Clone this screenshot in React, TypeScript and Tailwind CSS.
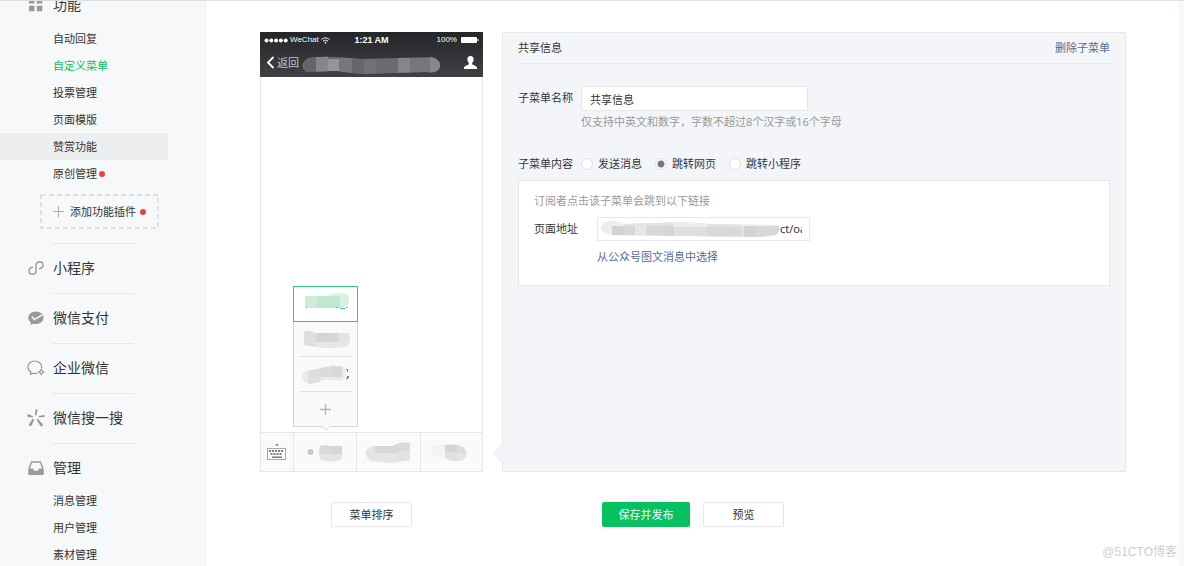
import React from "react";

type Cell = [x: number, y: number, w: number, h: number, fill: string];

function Mosaic({ id, w, h, shape, cells, base, className = "" }: {
  id: string; w: number; h: number; shape: string; cells: Cell[]; base: string; className?: string;
}) {
  return (
    <svg width={w} height={h} viewBox={`0 0 ${w} ${h}`} className={`shrink-0 ${className}`} aria-hidden="true">
      <clipPath id={id}><path d={shape} /></clipPath>
      <g clipPath={`url(#${id})`}>
        <rect width={w} height={h} fill={base} />
        {cells.map(([x, y, cw, ch, fill], i) => <rect key={i} x={x} y={y} width={cw} height={ch} fill={fill} />)}
      </g>
    </svg>
  );
}

const GridIcon = () => (
  <svg width="18" height="18" viewBox="0 0 18 18" fill="#999">
    <rect x="2" y="2" width="5.500" height="5.500" rx=".5" /><rect x="9.800" y="2" width="5.500" height="5.500" rx=".5" />
    <rect x="2" y="9.800" width="5.500" height="5.500" rx=".5" /><rect x="9.800" y="9.800" width="5.500" height="5.500" rx=".5" />
  </svg>
);

const MiniProgramIcon = () => (
  <svg width="18" height="18" viewBox="0 0 18 18" fill="none" stroke="#999" strokeWidth="1.400" strokeLinecap="round">
    <path d="M5.600 8.300C3.400 8.600 2 10 2 11.900c0 2 1.500 3.400 3.500 3.400S9 13.900 9 12V6.200C9 4.200 10.600 2.800 12.500 2.800S16 4.200 16 6c0 1.900-1.400 3.300-3.500 3.600" />
  </svg>
);

const PayIcon = () => (
  <svg width="18" height="18" viewBox="0 0 18 18">
    <path d="M9 2.400c4.200 0 7.500 2.800 7.500 6.300S13.200 15 9 15c-.9 0-1.700-.1-2.500-.3L3.300 16l.5-2.500C2.300 12.400 1.300 10.700 1.300 8.700 1.300 5.200 4.800 2.400 9 2.400Z" fill="#999" />
    <path d="M4.800 7.600 7.300 10.600 15.200 6" fill="none" stroke="#f6f8f9" strokeWidth="1.500" />
  </svg>
);

const WorkIcon = () => (
  <svg width="18" height="18" viewBox="0 0 18 18" fill="none" stroke="#999" strokeWidth="1.200" strokeLinejoin="round">
    <path d="M10.600 14.200c-1.400.4-3 .4-4.400 0L3.500 15.400l.3-2.600C1.900 11.600.8 10 .8 8 .8 4.600 3.900 2 7.700 2s6.900 2.600 6.900 6c0 .5-.1 1-.2 1.400" />
    <path d="m14.200 10.300 1 1.600 1.600 1-1.600 1-1 1.600-1-1.600-1.600-1 1.600-1Z" />
  </svg>
);

const SearchSparkIcon = () => (
  <svg width="18" height="18" viewBox="0 0 18 18" fill="#999">
    <path d="M8.400.8Q9.700-.3 10.600 1L9.200 6.200H7.900ZM.3 6.600Q.2 5.100 1.800 5.200L6 7.300 5.700 8.600.9 7.900ZM17.600 5.900Q18.100 7.400 17 7.900L11.900 8.300 11.700 7ZM2.800 16.900Q1.400 16.200 2.200 14.800L5.700 9.700 7.300 10.200 4.700 16.600Q3.900 17.400 2.800 16.900ZM9.500 10.500 11 9.900 15.600 14.900Q16.300 16.300 15.300 17 14.100 17.600 13.300 16.700Z" />
  </svg>
);

const TrayIcon = () => (
  <svg width="18" height="18" viewBox="0 0 18 18">
    <path d="M4.500 3h9L16 10v5.300H2V10Z" fill="none" stroke="#999" strokeWidth="1.400" strokeLinejoin="round" />
    <path d="M2 9.500h4c.2 1.700 1.300 2.500 3 2.500s2.800-.8 3-2.500h4v6H2Z" fill="#999" />
  </svg>
);

const featureItems = [
  { label: "自动回复" },
  { label: "自定义菜单", active: true },
  { label: "投票管理" },
  { label: "页面模版" },
  { label: "赞赏功能", hover: true },
  { label: "原创管理", dot: true },
];

const sections = [
  { label: "小程序", icon: <MiniProgramIcon /> },
  { label: "微信支付", icon: <PayIcon /> },
  { label: "企业微信", icon: <WorkIcon /> },
  { label: "微信搜一搜", icon: <SearchSparkIcon /> },
  { label: "管理", icon: <TrayIcon /> },
];

const Dot = () => <span className="size-1.5 rounded-full bg-[#e64340]" />;

function SubItem({ label, active, hover, dot }: { label: string; active?: boolean; hover?: boolean; dot?: boolean }) {
  return (
    <li>
      <a
        href="#"
        className={`flex h-[27px] items-center gap-0.5 pl-[53px] ${active ? "text-[#07c160]" : ""} ${hover ? "mr-[37px] bg-[#edeeef]" : ""}`}
      >
        {label}
        {dot && <Dot />}
      </a>
    </li>
  );
}

function Sidebar() {
  return (
    <nav className="w-[206px] shrink-0 border-r border-[#eef0f2] bg-[#f6f8f9]">
      <a href="#" className="-mt-2 flex h-6 items-center gap-2 pl-[27px] text-sm"><GridIcon />功能</a>
      <ul className="mt-2">{featureItems.map((i) => <SubItem key={i.label} {...i} />)}</ul>
      <button className="mt-[7px] ml-10 flex h-[35px] w-[119px] items-center justify-center gap-1.5">
        <svg className="absolute" width="119" height="35" fill="none" aria-hidden="true">
          <rect x="1" y="1" width="117" height="33" stroke="#d5d7d9" strokeWidth="1.500" strokeDasharray="5 3" />
        </svg>
        <svg width="11" height="11" viewBox="0 0 11 11" stroke="#aaa"><path d="M0 5.500h11M5.500 0v11" /></svg>
        <span className="flex items-center gap-1">添加功能插件<Dot /></span>
      </button>
      <div className="mt-3.5">
        {sections.map((s) => (
          <div key={s.label}>
            <div className="mr-[71px] ml-[53px] border-t border-[#e7e8eb]" />
            <a href="#" className="flex h-[49px] items-center gap-2 pb-0.5 pl-[27px] text-sm">{s.icon}{s.label}</a>
          </div>
        ))}
      </div>
      <ul className="-mt-1.5">
        <SubItem label="消息管理" /><SubItem label="用户管理" /><SubItem label="素材管理" />
      </ul>
    </nav>
  );
}

function PhoneHeader() {
  return (
    <header className="flex h-[45px] flex-col bg-gradient-to-b from-[#252628] to-[#404145] text-white">
      <div className="grid h-4 grid-cols-3 items-center px-1 font-['Liberation_Sans',sans-serif] text-[8px] leading-4">
        <div className="flex items-center gap-0.5">
          <svg width="24" height="5" fill="#fff"><circle cx="2.500" cy="2.500" r="2" /><circle cx="7.300" cy="2.500" r="2" /><circle cx="12.100" cy="2.500" r="2" /><circle cx="16.900" cy="2.500" r="2" /><circle cx="21.700" cy="2.500" r="2" /></svg>
          WeChat
          <svg width="9" height="7" viewBox="0 0 9 7" fill="none" stroke="#fff"><path d="M.5 2.500C2.800.4 6.200.4 8.500 2.500M2 4.200c1.500-1.300 3.500-1.300 5 0" /><circle cx="4.500" cy="5.800" r=".5" fill="#fff" /></svg>
        </div>
        <span className="text-center text-[9px] font-bold">1:21 AM</span>
        <div className="flex items-center justify-end gap-1">100%
          <svg width="18" height="6"><rect width="16" height="6" rx="1" fill="#fff" /><rect x="16.500" y="2" width="1" height="2" fill="#fff" /></svg>
        </div>
      </div>
      <div className="flex flex-1 items-center px-1.5">
        <svg width="9" height="13" viewBox="0 0 9 13" fill="none" stroke="#fff" strokeWidth="1.800"><path d="M7.500 1 2 6.500 7.500 12" /></svg>
        <span className="ml-0.5 text-[#c4c5c6]">返回</span>
        <Mosaic
          id="title-mask" w={140} h={18} base="#66676b" className="mt-1 ml-0.5"
          shape="M7 2Q20 0 38 1L60 3 130 1Q140 3 139 11 137 18 125 16L60 18 35 15 5 16Q-3 9 7 2Z"
          cells={[[0,0,15,18,"#64656b"],[15,0,12,18,"#87858a"],[27,3,11,12,"#94949a"],[38,2,13,16,"#77777b"],[51,2,12,16,"#67676b"],[63,3,12,15,"#766d75"],[75,3,22,15,"#6b6a70"],[97,2,12,16,"#858689"],[109,2,20,16,"#747679"],[129,0,10,18,"#86878a"]]}
        />
        <svg className="ml-auto" width="13" height="13" viewBox="0 0 13 13" fill="#fff"><path d="M6.500 0C8.500 0 9.800 1.500 9.600 3.500 9.500 5 9 6.200 8.200 6.800v1.400c0 .7 4.800 1.600 4.800 3.300V13H0v-1.500c0-1.700 4.800-2.600 4.800-3.300V6.800C4 6.200 3.500 5 3.400 3.500 3.200 1.500 4.500 0 6.500 0Z" /></svg>
      </div>
    </header>
  );
}

function Phone() {
  return (
    <section className="flex h-[440px] w-[223px] shrink-0 flex-col">
      <PhoneHeader />
      <div className="flex-1 border-x border-[#e7e7eb]" />
      <div className="grid h-10 grid-cols-[33px_63px_64px_1fr] divide-x divide-[#e7e7eb] border border-[#e7e7eb] bg-[#fafafa]">
        <button aria-label="键盘" className="flex items-center justify-center">
          <svg width="20" height="18" viewBox="0 0 20 18" fill="#777b82">
            <path d="M8 2.500 10 .5l2 2Z" /><rect x=".5" y="5.500" width="18" height="11" fill="#fff" stroke="#a5a8ad" />
            <path d="M2 7h2v2H2zM5 7h2v2H5zM8 7h2v2H8zM11 7h2v2h-2zM14 7h2v2h-2zM3.500 10h2v2h-2zM6.500 10h2v2h-2zM9.500 10h2v2h-2zM12.500 10h2v2h-2zM5 13.500h10v1.500H5z" />
          </svg>
        </button>
        <div className="relative flex">
          <div className="absolute bottom-11 -left-px flex w-[65px] flex-col border border-[#d4d4d8] bg-[#fafafa]">
            <button aria-label="子菜单一" className="relative -mx-px -mt-px flex h-9 items-center justify-center border border-[#2fc977] bg-white">
              <Mosaic id="sub-a" w={48} h={17} base="#def4e8" className="-mt-2"
                shape="M3 4H24Q32 0 42 1 48 3 47 10 45 15 38 16L3 16Z"
                cells={[[3,4,12,12,"#ccecd9"],[15,4,12,12,"#c3e8d1"],[27,4,11,12,"#bfe8cf"],[38,3,10,13,"#d5f1e1"]]} />
              <svg className="absolute bottom-3 left-3" width="44" height="3" fill="#4fc783"><path d="M0 1h1v1H0zM30 1h2v1h-2zM34 2h5v1h-5zM40 1h2v1h-2z" /></svg>
            </button>
            <button aria-label="子菜单二" className="mx-[5px] flex h-[35px] items-center justify-center border-b border-[#e3e3e5]">
              <Mosaic id="sub-b" w={48} h={18} base="#e7e7e7"
                shape="M2 2Q7-1 13 3H47Q49 6 47 16 30 20 15 17L2 15Z"
                cells={[[2,0,12,18,"#dedede"],[14,3,12,9,"#d5d4d4"],[26,3,11,9,"#d9d7d6"],[37,3,11,9,"#e2e4e7"]]} />
            </button>
            <button aria-label="子菜单三" className="mx-[5px] flex h-[35px] items-center justify-center border-b border-[#e3e3e5]">
              <Mosaic id="sub-c" w={44} h={19} base="#ebebeb"
                shape="M5 6 20 3Q25-1 42 2 47 12 39 16L25 15 8 19Q-2 17 0 8Z"
                cells={[[6,0,12,19,"#dedede"],[18,2,11,10,"#dcdbda"],[29,0,11,12,"#d7d8d8"]]} />
              <svg width="3" height="10" fill="#777b99"><path d="M0 0h2v3H1V1H0zM1 7h2v2H2v1H0V9h1z" /></svg>
            </button>
            <button aria-label="添加" className="flex h-[34px] items-center justify-center">
              <svg width="11" height="11" stroke="#b5b5b5" strokeWidth="1.300"><path d="M0 5.500h11M5.500 0v11" /></svg>
            </button>
            <svg className="absolute top-full left-[27px]" width="10" height="5" viewBox="0 0 10 5"><path d="m0 0 5 4 5-4" fill="#fafafa" stroke="#d4d4d8" /></svg>
          </div>
          <button aria-label="菜单一" className="flex flex-1 items-center justify-center gap-1">
            <svg width="7" height="7"><circle cx="3.500" cy="3" r="2" fill="#ddd" stroke="#bbb" strokeWidth="1.500" /></svg>
            <Mosaic id="bar-a" w={25} h={18} base="#e4e4e4" className="mt-0.5" shape="M1 3Q5 0 12 2H24V15Q14 20 3 16 0 13 1 3Z"
              cells={[[2,0,12,10,"#d9d9d9"],[14,0,11,10,"#d6d6d7"]]} />
          </button>
        </div>
        <button aria-label="菜单二" className="flex items-center justify-center">
          <Mosaic id="bar-b" w={48} h={21} base="#e5e5e5" shape="M9 4H28Q34-1 45 1V18L25 21 6 19Q-3 12 3 6Z"
            cells={[[10,2,23,9,"#d9d8d7"],[33,0,13,9,"#dadada"],[33,9,13,12,"#e0e1e1"]]} />
        </button>
        <button aria-label="菜单三" className="flex items-center pl-2.5">
          <Mosaic id="bar-c" w={38} h={18} base="#eeeeee" shape="M3 2H14Q28 0 34 6 38 13 32 17 20 20 13 14L2 13Q-1 6 3 2Z"
            cells={[[0,0,14,18,"#f2f3f3"],[14,0,12,9,"#d6d4d2"],[14,9,12,9,"#e0e0e0"],[26,2,12,9,"#dddddd"],[26,11,12,7,"#e5e5e5"]]} />
        </button>
      </div>
    </section>
  );
}

function Editor() {
  const choices = ["发送消息", "跳转网页", "跳转小程序"];
  return (
    <section className="relative min-w-0 flex-1 border border-[#e7e7eb] bg-[#f4f5f9] px-[15px]">
      <svg className="absolute bottom-2 -left-[10px]" width="11" height="20" viewBox="0 0 11 20"><path d="M11 0 1 10l10 10Z" fill="#f4f5f9" /><path d="M10.500 0 .7 10l9.800 10" fill="none" stroke="#e7e7eb" /></svg>
      <div className="flex h-[31px] items-center justify-between border-b border-[#e7e7eb]">
        <h2>共享信息</h2>
        <a href="#" className="text-[#576b95]">删除子菜单</a>
      </div>
      <div className="mt-[22px] flex">
        <label htmlFor="menu-name" className="w-[63px] shrink-0 leading-6">子菜单名称</label>
        <div>
          <input id="menu-name" defaultValue="共享信息" className="block h-[25px] w-[227px] border border-[#e7e7eb] bg-white px-2 outline-none" />
          <p className="mt-[3px] text-[#9a9a9a]">仅支持中英文和数字，字数不超过8个汉字或16个字母</p>
        </div>
      </div>
      <fieldset className="mt-[26px] flex">
        <legend className="float-left w-[63px]">子菜单内容</legend>
        <div className="flex gap-[13px]">
          {choices.map((c) => (
            <label key={c} className="flex items-center gap-[5px]">
              <input type="radio" name="content" defaultChecked={c === "跳转网页"}
                className="size-3 appearance-none rounded-full border border-[#dfe0e3] bg-white checked:bg-[radial-gradient(circle,#777_3px,#fff_4px)]" />
              {c}
            </label>
          ))}
        </div>
      </fieldset>
      <div className="mt-2 border border-[#e7e7eb] bg-white px-[15px] pt-3 pb-5">
        <p className="text-[#9a9a9a]">订阅者点击该子菜单会跳到以下链接</p>
        <div className="mt-2 flex items-center">
          <label htmlFor="page-url" className="w-[63px]">页面地址</label>
          <div className="flex h-6 w-[213px] items-center border border-[#e7e7eb] px-[3px]">
            <Mosaic id="url-mask" w={179} h={18} base="#e2e2e2"
              shape="M5 2Q15-1 22 4L80 2 110 4 177 5Q181 9 175 15L160 17 12 15Q-4 12 1 5Z"
              cells={[[0,0,11,18,"#ededed"],[11,0,12,6,"#eeeeee"],[11,6,12,12,"#d2d2d2"],[23,6,11,12,"#d8d8d8"],[34,2,11,15,"#e7e7e7"],[45,6,17,12,"#d8d8d8"],[62,6,11,12,"#d5d5d5"],[73,2,33,5,"#eeeeee"],[73,7,33,11,"#dfdfde"],[106,7,34,11,"#d9d9d8"],[140,0,39,6,"#eeeeee"],[143,6,12,12,"#d3d3d3"],[155,6,24,12,"#d8d8d8"]]} />
            <input id="page-url" defaultValue="ct/oauth" className="w-[22px] min-w-0 bg-transparent p-0 outline-none" />
          </div>
        </div>
        <a href="#" className="mt-2 ml-[63px] block w-fit text-[#576b95]">从公众号图文消息中选择</a>
      </div>
    </section>
  );
}

export default function App() {
  const plain = "h-[25px] w-[81px] rounded-xs border border-[#e7e7eb] bg-white";
  return (
    <div className="relative flex h-screen overflow-hidden border-t border-[#dcdfe3] bg-white font-['Noto_Sans','Noto_Sans_CJK_SC',sans-serif] text-[11px] leading-4 text-[#353535]">
      <Sidebar />
      <main className="min-w-0 flex-1 border-r-[5px] border-[#f6f8f9] pt-[31px] pr-[53px] pl-[54px]">
        <div className="flex gap-[19px]">
          <Phone />
          <Editor />
        </div>
        <div className="mt-[30px] flex gap-[19px]">
          <div className="flex w-[223px] shrink-0 justify-center"><button className={plain}>菜单排序</button></div>
          <div className="flex gap-[13px] pl-[100px]">
            <button className="h-[25px] w-[88px] rounded-xs bg-[#07c160] text-white">保存并发布</button>
            <button className={plain}>预览</button>
          </div>
        </div>
      </main>
      <span className="absolute right-[7px] bottom-1.5 font-['Liberation_Sans','Noto_Sans_CJK_SC',sans-serif] text-xs text-[#cfcfcf]">@51CTO博客</span>
    </div>
  );
}
